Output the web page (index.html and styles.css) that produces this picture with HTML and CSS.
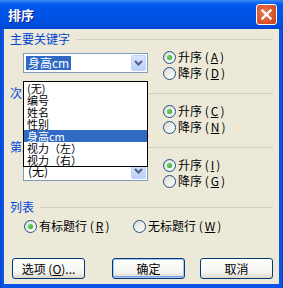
FILE: index.html
```html
<!DOCTYPE html>
<html lang="zh-CN">

<head>
    <meta charset="UTF-8">
    <meta name="viewport" content="width=device-width,initial-scale=1.0">
    <title>排序</title>
    <link rel="stylesheet" href="styles.css">
</head>

<body>
    <div class="window">
        <!-- title bar -->
        <div class="titlebar">
            <span class="title">排序</span>
            <span class="close">
                <svg width="11" height="11" viewBox="0 0 11 11">
                    <path d="M1.5 1.5l8 8M9.5 1.5l-8 8" stroke="#fff" stroke-width="2.3" stroke-linecap="square" fill="none" />
                </svg>
            </span>
        </div>

        <div class="content">
            <!-- first key -->
            <div class="group">
                <div class="group-head"><span class="group-label">主要关键字</span></div>
                <div class="group-row">
                    <div class="combo-wrap">
                        <div class="combo">
                            <span class="combo-text selected">身高cm</span>
                            <span class="combo-btn">
                                <svg width="9" height="6" viewBox="0 0 9 6">
                                    <path d="M1 1l3.5 3.5L8 1" stroke="#4D6185" stroke-width="2" fill="none" />
                                </svg>
                            </span>
                        </div>
                        <ul class="dropdown">
                            <li>(无)</li>
                            <li>编号</li>
                            <li>姓名</li>
                            <li>性别</li>
                            <li class="active">身高cm</li>
                            <li>视力（左）</li>
                            <li>视力（右）</li>
                        </ul>
                    </div>
                    <div class="radios">
                        <label class="radio"><span class="dot checked"></span>升序 (<u>A</u>)</label>
                        <label class="radio"><span class="dot"></span>降序 (<u>D</u>)</label>
                    </div>
                </div>
            </div>

            <!-- second key (combo hidden under the open list) -->
            <div class="group">
                <div class="group-head"><span class="group-label">次要关键字</span></div>
                <div class="group-row">
                    <div class="combo-wrap">
                        <div class="combo">
                            <span class="combo-text"></span>
                            <span class="combo-btn"></span>
                        </div>
                    </div>
                    <div class="radios">
                        <label class="radio"><span class="dot checked"></span>升序 (<u>C</u>)</label>
                        <label class="radio"><span class="dot"></span>降序 (<u>N</u>)</label>
                    </div>
                </div>
            </div>

            <!-- third key -->
            <div class="group">
                <div class="group-head"><span class="group-label">第三关键字</span></div>
                <div class="group-row">
                    <div class="combo-wrap">
                        <div class="combo">
                            <span class="combo-text">(无)</span>
                            <span class="combo-btn">
                                <svg width="9" height="6" viewBox="0 0 9 6">
                                    <path d="M1 1l3.5 3.5L8 1" stroke="#4D6185" stroke-width="2" fill="none" />
                                </svg>
                            </span>
                        </div>
                    </div>
                    <div class="radios">
                        <label class="radio"><span class="dot checked"></span>升序 (<u>I</u>)</label>
                        <label class="radio"><span class="dot"></span>降序 (<u>G</u>)</label>
                    </div>
                </div>
            </div>

            <!-- list -->
            <div class="group list">
                <div class="group-head"><span class="group-label">列表</span></div>
                <div class="list-row">
                    <label class="radio wide"><span class="dot checked"></span>有标题行 (<u>R</u>)</label>
                    <label class="radio"><span class="dot"></span>无标题行 (<u>W</u>)</label>
                </div>
            </div>

            <!-- buttons -->
            <div class="buttons">
                <button class="btn btn-options">选项 (<u>O</u>)...</button>
                <button class="btn default">确定</button>
                <button class="btn">取消</button>
            </div>
        </div>
    </div>
</body>

</html>
```

FILE: styles.css
```css
/* XP style sort dialog */
* {
    padding: 0;
    margin: 0;
    box-sizing: border-box;
}

body {
    font-family: "Noto Sans CJK SC", "Liberation Sans", sans-serif;
    font-size: 12px;
    line-height: 14px;
    color: #000;
    background: #fff;
}

.window {
    width: 283px;
    height: 288px;
    background: linear-gradient(to right, #0842C8, #0A55E6 2px, #0A55E6 281px, #0842C8);
    padding-bottom: 4px;
    display: flex;
    flex-direction: column;
}

/* Title bar */
.titlebar {
    height: 29px;
    display: flex;
    align-items: center;
    justify-content: space-between;
    padding: 0 6px 0 8px;
    background: linear-gradient(to bottom, #3C8CF8 0, #1A6FF3 2px, #0058EE 5px, #0054E8 40%, #0050E0 80%, #0244D0 100%);
}

.title {
    color: #fff;
    font-weight: bold;
    font-size: 13px;
    text-shadow: 1px 1px 0 #0A1E8A;
    padding-top: 1px;
}

.close {
    width: 21px;
    height: 21px;
    border: 1px solid #fff;
    border-radius: 3px;
    background: radial-gradient(circle at 40% 40%, #E87A56, #D9542C 60%, #C23C18);
    display: grid;
    place-items: center;
}

/* Dialog body */
.content {
    flex: 1;
    margin: 0 4px;
    background: #ECE9D8;
    padding: 3px 6px 0 6px;
}

.group {
    height: 54px;
}

.group-head {
    height: 14px;
    display: flex;
    align-items: center;
    gap: 6px;
}

.group-head::after {
    content: "";
    flex: 1;
    border-top: 1px solid #D0D0BF;
}

.group-label {
    color: #0046D5;
}

.group-row {
    display: grid;
    grid-template-columns: 125px auto;
    column-gap: 15px;
    padding-left: 13px;
}

/* Combo box */
.combo-wrap {
    position: relative;
    margin-top: 7px;
}

.combo {
    height: 20px;
    border: 1px solid #7F9DB9;
    background: #fff;
    display: flex;
    align-items: center;
    justify-content: space-between;
    padding: 1px;
}

.combo-text {
    margin-left: 1px;
    padding: 0 2px;
    line-height: 14px;
}

.combo-text.selected {
    background: #316AC5;
    color: #fff;
}

.combo-btn {
    width: 15px;
    height: 16px;
    border-radius: 2px;
    background: linear-gradient(to bottom, #D9E4FD, #BDD0F8);
    border: 1px solid #C3D3FD;
    display: grid;
    place-items: center;
}

.dropdown {
    position: absolute;
    top: 100%;
    left: 0;
    width: 125px;
    list-style: none;
    background: #fff;
    border: 1px solid #000;
    z-index: 2;
}

.dropdown li {
    height: 12px;
    font-size: 11px;
    line-height: 12px;
    padding-left: 3px;
    white-space: nowrap;
}

.dropdown li.active {
    background: #316AC5;
    color: #fff;
}

/* Radio buttons */
.radios {
    padding-top: 3px;
}

.radio {
    height: 16px;
    display: flex;
    align-items: center;
    gap: 2px;
    white-space: nowrap;
}

.dot {
    width: 13px;
    height: 13px;
    border-radius: 50%;
    border: 1px solid #1C5180;
    background: linear-gradient(135deg, #DCDCD6, #FFFFFF);
    display: grid;
    place-items: center;
}

.dot.checked::after {
    content: "";
    width: 5px;
    height: 5px;
    border-radius: 50%;
    background: radial-gradient(circle at 35% 35%, #6ED56E, #21A121);
}

/* List section */
.group.list {
    height: auto;
    margin-top: 6px;
}

.list-row {
    display: flex;
    padding: 4px 0 0 14px;
}

.radio.wide {
    width: 109px;
}

/* Buttons */
.buttons {
    display: flex;
    gap: 15px;
    margin-top: 24px;
    padding-left: 2px;
}

.btn {
    width: 73px;
    height: 21px;
    font-family: inherit;
    font-size: 12px;
    border: 1px solid #003C74;
    border-radius: 3px;
    background: linear-gradient(to bottom, #FFFFFF, #F4F4F0 70%, #DCD8CC);
    color: #000;
}

.btn-options {
    margin-right: 12px;
}

.btn.default {
    box-shadow: inset 0 0 0 1px #A8C4F4, inset 0 -1px 0 1px #7EA0E6;
}
```
